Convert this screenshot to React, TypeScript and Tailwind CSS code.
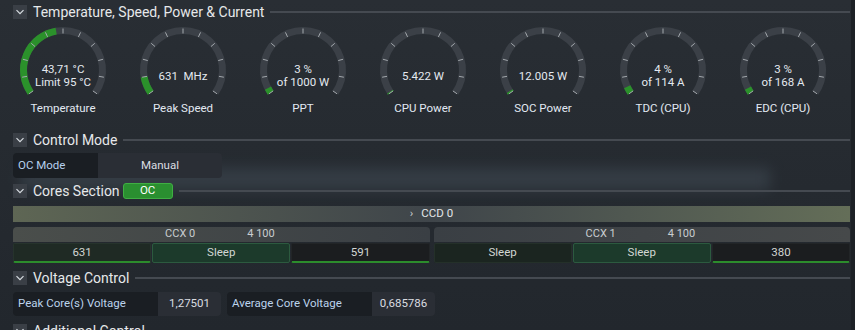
import React from "react";

const FONT = { fontFamily: 'Roboto, "Noto Sans", Arial, sans-serif' };

type GaugeData = {
  label: string;
  lines: string[];
  frac: number;
};

const gauges: GaugeData[] = [
  { label: "Temperature", lines: ["43,71 °C", "Limit 95 °C"], frac: 0.46 },
  { label: "Peak Speed", lines: ["631  MHz"], frac: 0.1 },
  { label: "PPT", lines: ["3 %", "of 1000 W"], frac: 0.03 },
  { label: "CPU Power", lines: ["5.422 W"], frac: 0.006 },
  { label: "SOC Power", lines: ["12.005 W"], frac: 0.01 },
  { label: "TDC (CPU)", lines: ["4 %", "of 114 A"], frac: 0.04 },
  { label: "EDC (CPU)", lines: ["3 %", "of 168 A"], frac: 0.03 },
];

const CX = 45;
const CY = 44;
const START = -125;
const SPAN = 250;

function pt(deg: number, r: number) {
  const a = (deg * Math.PI) / 180;
  return [CX + r * Math.sin(a), CY - r * Math.cos(a)];
}

function arc(a0: number, a1: number, r: number) {
  const [x0, y0] = pt(a0, r);
  const [x1, y1] = pt(a1, r);
  const large = a1 - a0 > 180 ? 1 : 0;
  return `M ${x0} ${y0} A ${r} ${r} 0 ${large} 1 ${x1} ${y1}`;
}

function Gauge({ g }: { g: GaugeData }) {
  const end = START + SPAN * Math.max(g.frac, 0.004);
  return (
    <div className="flex w-[120px] flex-col items-center">
      <div className="relative h-[72px] w-[90px]">
        <svg width="90" height="72" viewBox="0 0 90 72">
          <path d={arc(START, START + SPAN, 39.5)} fill="none" stroke="#3b4047" strokeWidth="7" />
          <path d={arc(START, end, 39.5)} fill="none" stroke="#2b912b" strokeWidth="7" />
          {Array.from({ length: 11 }).map((_, i) => {
            const a = START + i * 25;
            const [x0, y0] = pt(a, 36.5);
            const [x1, y1] = pt(a, 41.5);
            return <line key={i} x1={x0} y1={y0} x2={x1} y2={y1} stroke="#a4a9ae" strokeWidth="1" />;
          })}
        </svg>
        <div className="absolute inset-x-0 top-[37px] flex h-[26px] flex-col items-center justify-center text-[11.5px] leading-[13px] text-[#e4e9ef]">
          {g.lines.map((l) => (
            <span key={l} className="whitespace-pre">{l}</span>
          ))}
        </div>
      </div>
      <div className="mt-[3px] h-[15px] text-[11.5px] leading-[15px] text-[#e2e9f2]">{g.label}</div>
    </div>
  );
}

function Header({ title, children }: { title: string; children?: React.ReactNode }) {
  return (
    <div className="flex h-[20px] items-center">
      <div className="flex h-[14px] w-[14px] items-center justify-center bg-[#3a3f46]">
        <svg width="10" height="10" viewBox="0 0 10 10">
          <path d="M1.5 3.2 L5 6.7 L8.5 3.2" fill="none" stroke="#d8dde2" strokeWidth="1.2" />
        </svg>
      </div>
      <span className="ml-[6px] text-[14px] leading-[20px] text-[#e6e8ea]">{title}</span>
      {children}
      <div className="ml-[6px] h-[2px] flex-1 bg-[#454a51]" />
    </div>
  );
}

type Kind = "val" | "sleep" | "sleepHi" | "dark";

function Cell({ text, kind }: { text: string; kind: Kind }) {
  const cls =
    kind === "val"
      ? "bg-[#1f2a24] border-[#26332c] border-b-[#2c8c2c] border-b-2"
      : kind === "dark"
        ? "bg-[#1b1d1f] border-[#222527] border-b-[#2c8c2c] border-b-2"
        : kind === "sleepHi"
          ? "bg-[#1c3a2b] border-[#2c5a3f]"
          : "bg-[#1b2520] border-[#243029]";
  return (
    <div className={`flex h-[20px] flex-1 items-center justify-center rounded-[2px] border text-[11.5px] text-[#d2d6d3] ${cls}`}>
      {text}
    </div>
  );
}

function CcxPanel({ name, cells, flip }: { name: string; cells: [string, Kind][]; flip?: boolean }) {
  return (
    <div className="flex flex-1 flex-col">
      <div
        className={`flex h-[15px] items-center justify-center rounded-t-[4px] text-[11px] text-[#c9cdd0] ${
          flip ? "bg-gradient-to-r from-[#3a3f44] to-[#46494a]" : "bg-gradient-to-r from-[#4a4e4b] to-[#3a3f44]"
        }`}
      >
        <span className="w-[80px] text-right">{name}</span>
        <span className="ml-[52px] w-[80px]">4 100</span>
      </div>
      <div className="mt-px flex gap-px">
        {cells.map(([t, k], i) => (
          <Cell key={i} text={t} kind={k} />
        ))}
      </div>
    </div>
  );
}

function KV({ label, value }: { label: string; value: string }) {
  return (
    <div className="flex h-[24px] overflow-hidden rounded-[4px] text-[11.5px]">
      <div className="flex w-[145px] items-center bg-[#1a1e23] pl-[5px] text-[#bcd3ec]">{label}</div>
      <div className="flex w-[63px] items-center justify-center bg-[#2a2e35] text-[#dadde1]">{value}</div>
    </div>
  );
}

export default function App() {
  return (
    <div className="relative h-[330px] w-[855px] overflow-hidden bg-gradient-to-b from-[#292e34] to-[#22272d]" style={FONT}>
      <div className="absolute left-[20px] top-[168px] h-[22px] w-[750px] bg-[#3a434c] opacity-75 blur-[7px]" />
      <div className="absolute right-0 top-0 h-full w-[4px] bg-[#1d2126]" />
      <div className="relative flex flex-col pl-[13px] pr-[5px]">
        <div className="mt-[2px]">
          <Header title="Temperature, Speed, Power & Current" />
        </div>
        <div className="-ml-[10px] mt-[4px] flex">
          {gauges.map((g) => (
            <Gauge key={g.label} g={g} />
          ))}
        </div>
        <div className="mt-[14px]">
          <Header title="Control Mode" />
        </div>
        <div className="mt-[3px]">
          <div className="flex h-[25px] w-[209px] overflow-hidden rounded-[4px] text-[11.5px]">
            <div className="flex w-[85px] items-center bg-[#1a1e23] pl-[5px] text-[#b6d0ee]">OC Mode</div>
            <div className="flex flex-1 items-center justify-center bg-[#2a2e35] text-[#dadde1]">Manual</div>
          </div>
        </div>
        <div className="mt-[3px]">
          <Header title="Cores Section">
            <div className="ml-[3px] flex h-[16px] w-[50px] items-center justify-center rounded-[3px] border border-[#3fae43] bg-[#2a8f30] text-[11.5px] text-white">
              OC
            </div>
          </Header>
        </div>
        <div className="mt-[5px] flex h-[16px] items-center justify-center bg-gradient-to-r from-[#5e6654] via-[#3f454a] to-[#646e58] text-[11.5px] text-[#e2e5e8]">
          <span className="mr-[8px] text-[#c8ccd0]">›</span>
          CCD 0
        </div>
        <div className="mt-[5px] flex gap-[4px]">
          <CcxPanel
            name="CCX 0"
            cells={[
              ["631", "val"],
              ["Sleep", "sleepHi"],
              ["591", "dark"],
            ]}
          />
          <CcxPanel
            name="CCX 1"
            flip
            cells={[
              ["Sleep", "sleep"],
              ["Sleep", "sleepHi"],
              ["380", "dark"],
            ]}
          />
        </div>
        <div className="mt-[5px]">
          <Header title="Voltage Control" />
        </div>
        <div className="mt-[4px] flex gap-[6px]">
          <KV label="Peak Core(s) Voltage" value="1,27501" />
          <KV label="Average Core Voltage" value="0,685786" />
        </div>
        <div className="mt-[5px]">
          <Header title="Additional Control" />
        </div>
      </div>
    </div>
  );
}
